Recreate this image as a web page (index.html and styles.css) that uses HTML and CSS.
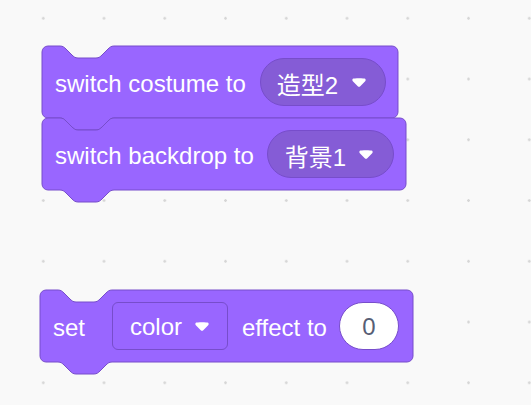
FILE: index.html
```html
<!DOCTYPE html>
<html>
<head>
<meta charset="utf-8">
<link rel="stylesheet" href="styles.css">
</head>
<body>
<div class="workspace">

  <div class="block block-costume">
    <svg class="shape" width="360" height="92" viewBox="0 0 360 92">
      <path transform="scale(1.5)" vector-effect="non-scaling-stroke" d="M 0,4 A 4,4 0 0,1 4,0 H 12 c 2,0 3,1 4,2 l 4,4 c 1,1 2,2 4,2 h 12 c 2,0 3,-1 4,-2 l 4,-4 c 1,-1 2,-2 4,-2 H 233.33 a 4,4 0 0,1 4,4 v 40 a 4,4 0 0,1 -4,4 H 48 c -2,0 -3,1 -4,2 l -4,4 c -1,1 -2,2 -4,2 h -12 c -2,0 -3,-1 -4,-2 l -4,-4 c -1,-1 -2,-2 -4,-2 H 4 a 4,4 0 0,1 -4,-4 z"/>
    </svg>
    <div class="row">
      <span class="label">switch costume to</span>
      <span class="dropdown pill d1">
        <span class="dd-text">造型2</span>
        <svg class="arrow" width="16" height="11" viewBox="0 0 12.71 8.79"><path d="M6.36,7.79a1.43,1.43,0,0,1-1-.42L1.42,3.45a1.44,1.44,0,0,1,0-2c0.56-.56,9.31-.56,9.870,0a1.44,1.44,0,0,1,0,2L7.370,7.370A1.43,1.43,0,0,1,6.36,7.79Z"/></svg>
      </span>
    </div>
  </div>

  <div class="block block-backdrop">
    <svg class="shape" width="368" height="92" viewBox="0 0 368 92">
      <path transform="scale(1.5)" vector-effect="non-scaling-stroke" d="M 0,4 A 4,4 0 0,1 4,0 H 12 c 2,0 3,1 4,2 l 4,4 c 1,1 2,2 4,2 h 12 c 2,0 3,-1 4,-2 l 4,-4 c 1,-1 2,-2 4,-2 H 238.67 a 4,4 0 0,1 4,4 v 40 a 4,4 0 0,1 -4,4 H 48 c -2,0 -3,1 -4,2 l -4,4 c -1,1 -2,2 -4,2 h -12 c -2,0 -3,-1 -4,-2 l -4,-4 c -1,-1 -2,-2 -4,-2 H 4 a 4,4 0 0,1 -4,-4 z"/>
    </svg>
    <div class="row">
      <span class="label">switch backdrop to</span>
      <span class="dropdown pill d2">
        <span class="dd-text">背景1</span>
        <svg class="arrow" width="16" height="11" viewBox="0 0 12.71 8.79"><path d="M6.36,7.79a1.43,1.43,0,0,1-1-.42L1.42,3.45a1.44,1.44,0,0,1,0-2c0.56-.56,9.31-.56,9.870,0a1.44,1.44,0,0,1,0,2L7.370,7.370A1.43,1.43,0,0,1,6.36,7.79Z"/></svg>
      </span>
    </div>
  </div>

  <div class="block block-effect">
    <svg class="shape" width="378" height="92" viewBox="0 0 378 92">
      <path transform="scale(1.5)" vector-effect="non-scaling-stroke" d="M 0,4 A 4,4 0 0,1 4,0 H 12 c 2,0 3,1 4,2 l 4,4 c 1,1 2,2 4,2 h 12 c 2,0 3,-1 4,-2 l 4,-4 c 1,-1 2,-2 4,-2 H 244.67 a 4,4 0 0,1 4,4 v 40 a 4,4 0 0,1 -4,4 H 48 c -2,0 -3,1 -4,2 l -4,4 c -1,1 -2,2 -4,2 h -12 c -2,0 -3,-1 -4,-2 l -4,-4 c -1,-1 -2,-2 -4,-2 H 4 a 4,4 0 0,1 -4,-4 z"/>
    </svg>
    <div class="row">
      <span class="label">set</span>
      <span class="dropdown square d3">
        <span class="dd-text">color</span>
        <svg class="arrow" width="16" height="11" viewBox="0 0 12.71 8.79"><path d="M6.36,7.79a1.43,1.43,0,0,1-1-.42L1.42,3.45a1.44,1.44,0,0,1,0-2c0.56-.56,9.31-.56,9.870,0a1.44,1.44,0,0,1,0,2L7.370,7.370A1.43,1.43,0,0,1,6.36,7.79Z"/></svg>
      </span>
      <span class="label effect-label">effect to</span>
      <span class="number">0</span>
    </div>
  </div>

</div>
</body>
</html>
```

FILE: styles.css
```css
html, body {
  margin: 0;
  padding: 0;
}

body {
  width: 531px;
  height: 405px;
  overflow: hidden;
  background-color: #f9f9f9;
  font-family: "Liberation Sans", Arial, "Noto Sans CJK SC", sans-serif;
}

.workspace {
  position: relative;
  width: 531px;
  height: 405px;
  background-color: #f9f9f9;
  background-image: radial-gradient(circle at center, #d6d6d6 0, #d6d6d6 1px, rgba(249,249,249,0) 1.6px);
  background-size: 60.75px 60.75px;
  background-position: 12.9px -12.1px;
}

.block {
  position: absolute;
  height: 72px;
}

.block-costume { left: 42px; top: 46px; width: 356px; z-index: 1; }
.block-backdrop { left: 42px; top: 118px; width: 364px; z-index: 2; }
.block-effect { left: 40px; top: 290px; width: 373px; z-index: 1; }

.shape {
  position: absolute;
  left: 0;
  top: 0;
  overflow: visible;
}

.shape path {
  fill: #9966ff;
  stroke: #774dcb;
  stroke-width: 1px;
}

.row {
  position: relative;
  display: flex;
  align-items: center;
  height: 72px;
  padding-left: 12px;
  box-sizing: border-box;
}

.label {
  color: #ffffff;
  font-size: 24px;
  white-space: nowrap;
  padding-top: 3px;
  padding-left: 1px;
}

.dropdown {
  display: flex;
  align-items: center;
  height: 48px;
  box-sizing: border-box;
  border: 1px solid #774dcb;
  color: #ffffff;
  font-size: 24px;
  white-space: nowrap;
}

.dd-text {
  font-family: "Liberation Sans", Arial, "Noto Sans CJK SC", sans-serif;
  padding-top: 2px;
}

.pill {
  border-radius: 24px;
  background-color: #855cd6;
}

.d1 {
  margin-left: 14px;
  width: 126px;
  padding-left: 16px;
  gap: 13px;
}

.d2 {
  margin-left: 13px;
  width: 127px;
  padding-left: 17px;
  gap: 12px;
}

.square {
  border-radius: 6px;
  background-color: #9966ff;
}

.d3 {
  margin-left: 27px;
  width: 116px;
  padding-left: 17px;
  gap: 12px;
}

.arrow {
  flex: none;
  display: block;
}

.arrow path {
  fill: #ffffff;
}

.effect-label {
  margin-left: 13px;
}

.number {
  margin-left: 12px;
  width: 60px;
  height: 48px;
  box-sizing: border-box;
  border: 1px solid #774dcb;
  border-radius: 24px;
  background-color: #ffffff;
  color: #575e75;
  font-size: 24px;
  padding-top: 2px;
  display: flex;
  align-items: center;
  justify-content: center;
}
```
